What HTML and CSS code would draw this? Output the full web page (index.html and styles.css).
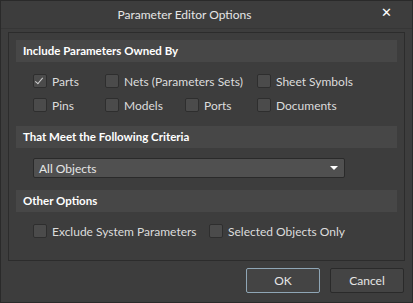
FILE: index.html
```html
<!DOCTYPE html>
<html lang="en">
  <head>
    <meta charset="UTF-8" />
    <title>Parameter Editor Options</title>
    <link rel="stylesheet" href="styles.css">
  </head>
  <body>
    <div class="dialog">
      <div class="titlebar">
        <div class="title">Parameter Editor Options</div>
        <div class="close">&#x2715;</div>
      </div>
      <div class="panel">
        <div class="section-head">Include Parameters Owned By</div>
        <div class="owners">
          <label class="check"><span class="box checked"></span>Parts</label>
          <label class="check wide"><span class="box"></span>Nets (Parameters Sets)</label>
          <label class="check"><span class="box"></span>Sheet Symbols</label>
          <label class="check"><span class="box"></span>Pins</label>
          <label class="check"><span class="box"></span>Models</label>
          <label class="check"><span class="box"></span>Ports</label>
          <label class="check"><span class="box"></span>Documents</label>
        </div>
        <div class="section-head">That Meet the Following Criteria</div>
        <div class="select-row">
          <div class="select">
            <span>All Objects</span>
            <span class="arrow"></span>
          </div>
        </div>
        <div class="section-head">Other Options</div>
        <div class="options">
          <label class="check exclude"><span class="box"></span>Exclude System Parameters</label>
          <label class="check"><span class="box"></span>Selected Objects Only</label>
        </div>
      </div>
      <div class="buttons">
        <button class="btn default">OK</button>
        <button class="btn">Cancel</button>
      </div>
    </div>
  </body>
</html>
```

FILE: styles.css
```css
body {
  margin: 0;
  background-color: #2b2b2b;
  font-family: Lato, "Noto Sans", sans-serif;
  font-size: 12px;
  color: #dcdcdc;
}
.dialog {
  width: 411px;
  height: 301px;
  border: 1px solid #2a2a2a;
  background-color: #3d3d3d;
  display: flex;
  flex-direction: column;
}
.titlebar {
  height: 27px;
  display: flex;
  align-items: center;
  justify-content: center;
  position: relative;
  border-bottom: 1px solid #363636;
}
.title {
  font-size: 12px;
  color: #e6e6e6;
  margin-left: -44px;
}
.close {
  position: absolute;
  right: 20px;
  top: 4px;
  font-family: "DejaVu Sans", sans-serif;
  font-size: 13px;
  font-weight: bold;
  color: #ffffff;
}
.panel {
  margin: 3px 7px 0 7px;
  height: 220px;
  border: 1px solid #2c2c2c;
  padding: 7px 7px 0 7px;
}
.section-head {
  height: 22px;
  line-height: 22px;
  padding-left: 7px;
  background-color: #474747;
  color: #ffffff;
  font-size: 11.5px;
  font-weight: bold;
}
.owners {
  display: grid;
  grid-template-columns: 72px 80px 72px auto;
  row-gap: 10px;
  padding: 12px 0 14px 17px;
}
.owners .wide {
  grid-column: span 2;
}
.check {
  display: flex;
  align-items: center;
  height: 14px;
  white-space: nowrap;
}
.box {
  width: 12px;
  height: 12px;
  margin-right: 5px;
  border: 1px solid #2e2e2e;
  border-radius: 2px;
  background-color: #4b4b4b;
  position: relative;
}
.box.checked::after {
  content: "";
  position: absolute;
  left: 3px;
  top: 1px;
  width: 3px;
  height: 7px;
  border: solid #cfcfcf;
  border-width: 0 1.5px 1.5px 0;
  transform: rotate(40deg);
}
.select-row {
  padding: 10px 0 12px 17px;
}
.select {
  width: 299px;
  height: 18px;
  padding: 0 6px 0 5px;
  border: 1px solid #2a2a2a;
  border-radius: 2px;
  background-color: #505050;
  color: #e6e6e6;
  display: flex;
  align-items: center;
  justify-content: space-between;
}
.arrow {
  width: 0;
  height: 0;
  border-left: 4px solid transparent;
  border-right: 4px solid transparent;
  border-top: 4px solid #ffffff;
}
.options {
  display: flex;
  padding: 12px 0 0 17px;
}
.options .exclude {
  width: 176px;
}
.buttons {
  display: flex;
  justify-content: flex-end;
  gap: 10px;
  padding: 7px 8px 0 0;
}
.btn {
  width: 74px;
  height: 25px;
  border: 1px solid #2a2a2a;
  border-radius: 2px;
  background-color: #444444;
  color: #e6e6e6;
  font-family: Lato, "Noto Sans", sans-serif;
  font-size: 12px;
}
.btn.default {
  border-color: #8fa6b6;
}
```
